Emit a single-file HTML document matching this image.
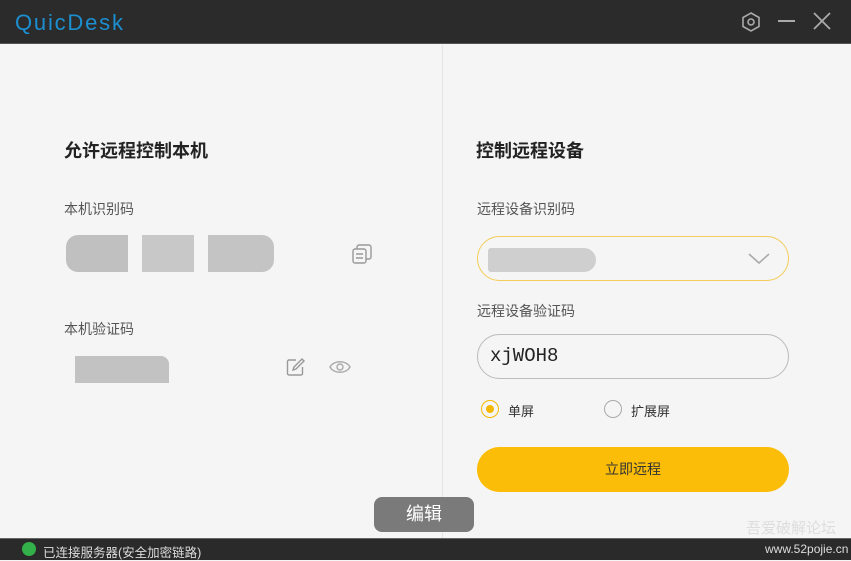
<!DOCTYPE html>
<html><head><meta charset="utf-8"><style>
*{margin:0;padding:0;box-sizing:border-box}
body{width:851px;height:560px;overflow:hidden;background:#f5f5f5;font-family:"Liberation Sans","Noto Sans CJK SC",sans-serif;position:relative;color:#333}
.abs{position:absolute}
.top{left:0;top:0;width:851px;height:44px;background:#2b2b2b;border-bottom:1px solid #555}
.logo{left:15px;top:10px;font-size:22px;color:#1b8fd0;letter-spacing:1.8px}
.div{left:442px;top:45px;width:1px;height:493px;background:#e4e4e4}
.h{font-size:18px;font-weight:bold;color:#222}
.l{font-size:14px;color:#555}
.bot{left:0;top:538px;width:851px;height:22px;background:#2a2a2a;border-top:1px solid #666}
</style></head><body>
<div class="abs top"></div>
<div class="abs logo">QuicDesk</div>
<svg class="abs" style="left:740px;top:11px" width="22" height="22" viewBox="0 0 22 22"><polygon points="11,2 19,6.5 19,15.5 11,20 3,15.5 3,6.5" fill="none" stroke="#aaa" stroke-width="1.6"/><circle cx="11" cy="11" r="3" fill="none" stroke="#aaa" stroke-width="1.6"/></svg>
<div class="abs" style="left:778px;top:20px;width:17px;height:2px;background:#aaa"></div>
<svg class="abs" style="left:812px;top:11px" width="20" height="20"><path d="M2 2L18 18M18 2L2 18" stroke="#aaa" stroke-width="1.8"/></svg>
<div class="abs div"></div>

<div class="abs h" style="left:64px;top:137px">允许远程控制本机</div>
<div class="abs l" style="left:64px;top:199px">本机识别码</div>
<div class="abs" style="left:66px;top:235px;width:62px;height:37px;background:#c0c0c0;border-radius:12px 0 0 12px"></div>
<div class="abs" style="left:142px;top:235px;width:52px;height:37px;background:#c8c8c8"></div>
<div class="abs" style="left:208px;top:235px;width:66px;height:37px;background:#c4c4c4;border-radius:0 12px 12px 0"></div>
<svg class="abs" style="left:351px;top:243px" width="22" height="22" viewBox="0 0 22 22" fill="none" stroke="#999" stroke-width="1.4"><rect x="2" y="6" width="13" height="14" rx="2"/><path d="M6 6V4a2 2 0 0 1 2-2h10a2 2 0 0 1 2 2v10a2 2 0 0 1-2 2h-3"/><path d="M5 11h7M5 15h7"/></svg>
<div class="abs l" style="left:64px;top:319px">本机验证码</div>
<div class="abs" style="left:75px;top:356px;width:94px;height:27px;background:#c2c2c2;border-radius:0 8px 0 0"></div>
<svg class="abs" style="left:285px;top:357px" width="21" height="21" viewBox="0 0 21 21" fill="none" stroke="#999" stroke-width="1.4"><path d="M11 3H4a1.5 1.5 0 0 0-1.5 1.5v12A1.5 1.5 0 0 0 4 18h12a1.5 1.5 0 0 0 1.5-1.5V10"/><path d="M8 13l1-3 8-8 2 2-8 8z"/></svg>
<svg class="abs" style="left:328px;top:358px" width="24" height="18" viewBox="0 0 24 18" fill="none" stroke="#aaa" stroke-width="1.4"><path d="M2 9C6 2 18 2 22 9 18 16 6 16 2 9z"/><circle cx="12" cy="9" r="3"/></svg>

<div class="abs h" style="left:476px;top:137px">控制远程设备</div>
<div class="abs l" style="left:477px;top:199px">远程设备识别码</div>
<div class="abs" style="left:477px;top:236px;width:312px;height:45px;border:1.5px solid #f4cd5c;border-radius:23px"></div>
<div class="abs" style="left:488px;top:248px;width:108px;height:24px;background:#cfcfcf;border-radius:3px 12px 12px 3px"></div>
<svg class="abs" style="left:747px;top:252px" width="24" height="14"><path d="M2 2L12 11L22 2" stroke="#aaa" stroke-width="1.6" fill="none"/></svg>
<div class="abs l" style="left:477px;top:301px">远程设备验证码</div>
<div class="abs" style="left:477px;top:334px;width:312px;height:45px;border:1.5px solid #bdbdbd;border-radius:23px"></div>
<div class="abs" style="left:490px;top:345px;font-family:'Liberation Mono',monospace;font-size:19px;color:#222">xjWOH8</div>
<div class="abs" style="left:481px;top:400px;width:18px;height:18px;border:1.5px solid #f5b800;border-radius:50%"></div>
<div class="abs" style="left:486px;top:405px;width:8px;height:8px;background:#f5b800;border-radius:50%"></div>
<div class="abs" style="left:508px;top:401px;font-size:13px;color:#333">单屏</div>
<div class="abs" style="left:604px;top:400px;width:18px;height:18px;border:1.5px solid #aaa;border-radius:50%"></div>
<div class="abs" style="left:631px;top:401px;font-size:13px;color:#333">扩展屏</div>
<div class="abs" style="left:477px;top:447px;width:312px;height:45px;background:#fbbd08;border-radius:23px;text-align:center;line-height:45px;font-size:14px;color:#333">立即远程</div>

<div class="abs" style="left:374px;top:497px;width:100px;height:35px;background:#7a7a7a;border-radius:8px;color:#fff;font-size:18px;text-align:center;line-height:35px">编辑</div>
<div class="abs" style="left:746px;top:517px;font-size:15px;color:#ddd">吾爱破解论坛</div>
<div class="abs bot"></div>
<div class="abs" style="left:22px;top:542px;width:14px;height:14px;background:#33b04a;border-radius:50%"></div>
<div class="abs" style="left:43px;top:542px;font-size:12.5px;color:#ddd">已连接服务器(安全加密链路)</div>
<div class="abs" style="left:765px;top:542px;font-size:12px;color:#ddd">www.52pojie.cn</div>
</body></html>
